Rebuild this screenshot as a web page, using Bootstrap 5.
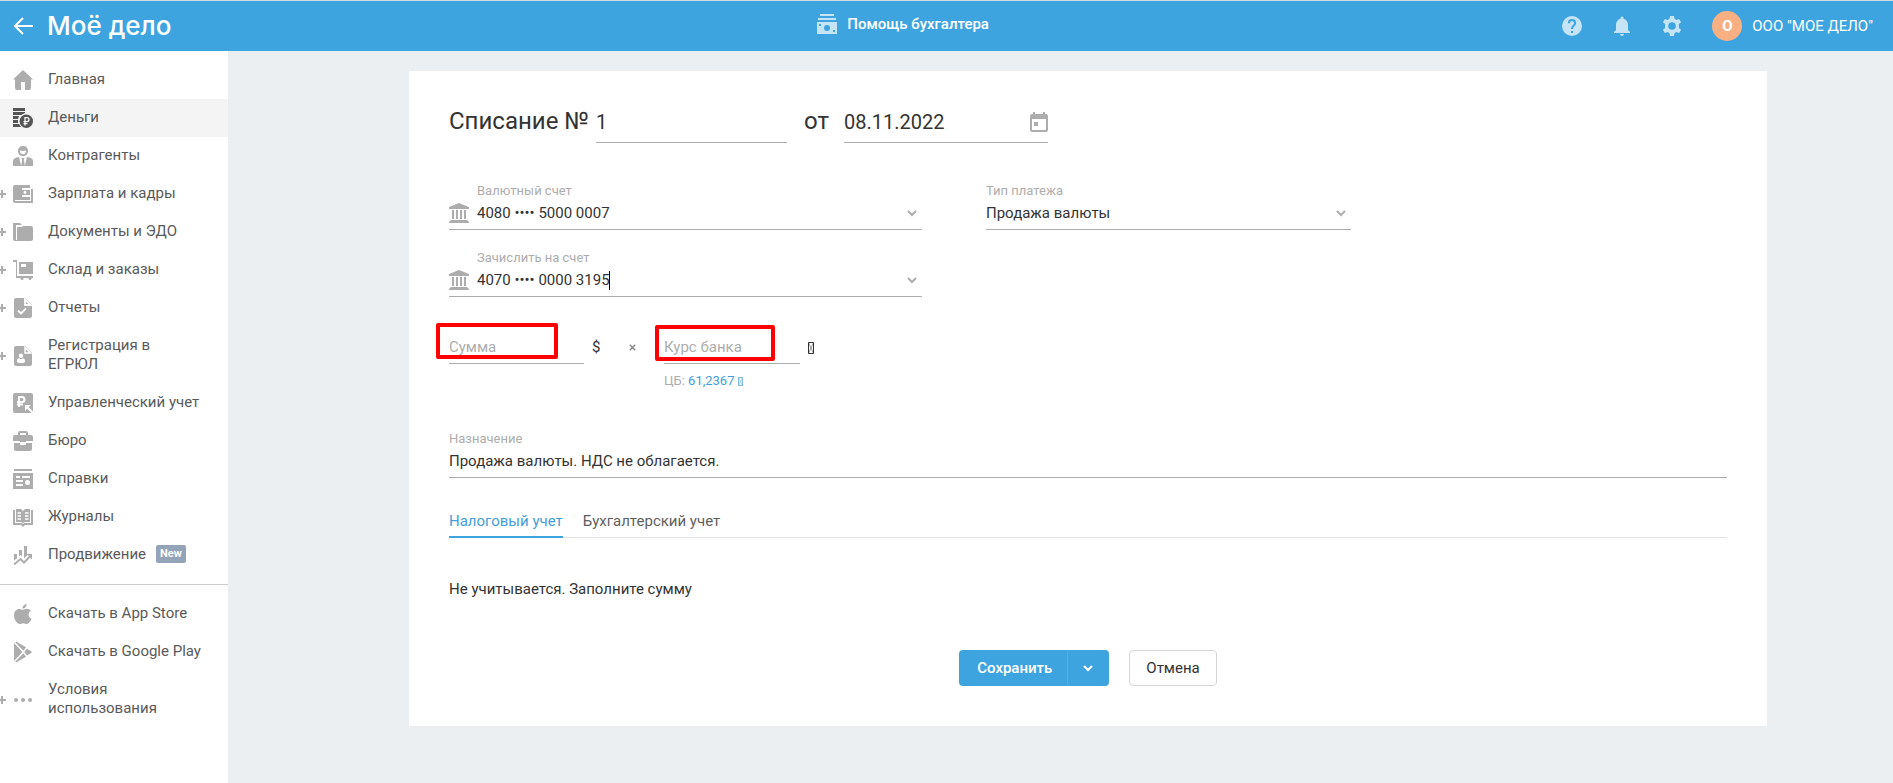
<!DOCTYPE html>
<html lang="ru">
<head>
<meta charset="utf-8">
<meta name="viewport" content="width=device-width, initial-scale=1">
<title>Моё дело — Списание</title>
<link href="https://cdn.jsdelivr.net/npm/bootstrap@5.3.0/dist/css/bootstrap.min.css" rel="stylesheet">
<style>
  :root { --blue: #3ea4e0; --ink: #333; --menu: #5a5a5a; --muted: #adadad; }
  body { font: 400 15px/19px Roboto, "Liberation Sans", sans-serif; color: var(--ink); background: #ebeff2; }
  a { text-decoration: none; }

  .topbar { height: 51px; background: var(--blue); border-top: 1px solid #d5dce1; color: #fff; padding-right: 20px; }
  .topbar a { color: #fff; }
  .brand-area { width: 228px; padding-left: 13px; gap: 14px; }
  .logo { font: 500 26px/30px Inter, sans-serif; }
  .pale { color: #c5e4f6; }
  .help-link { font-weight: 500; gap: 10px; padding-bottom: 4px; }
  .tools { gap: 30px; }
  .avatar { width: 30px; height: 30px; border-radius: 50%; background: #f8b083; font-weight: 700; }
  .account { gap: 10px; }

  .side { width: 228px; background: #fff; padding-top: 10px; min-height: calc(100vh - 51px); }
  .side a { color: var(--menu); padding: 9px 16px 10px 48px; position: relative; }
  .side a.active { background: #f4f4f4; }
  .side a > svg { position: absolute; left: 13px; top: 50%; margin-top: -10px; color: var(--muted); }
  .side a.active > svg { color: #555; }
  .side .expand::before, .side .expand::after { content: ""; position: absolute; background: var(--muted); top: 50%; }
  .side .expand::before { left: 0; width: 6px; height: 2px; margin-top: -1px; }
  .side .expand::after { left: 1px; width: 2px; height: 8px; margin-top: -4px; }
  .side .divider { height: 1px; margin: 10px 0; background: #ccc; border: 0; opacity: 1; }
  .tag-new { background: #93a3b8; font-size: 11px; line-height: 18px; font-weight: 700; padding: 0 4px; border-radius: 2px; margin-left: 10px; vertical-align: top; }

  .stage { padding: 20px 126px 40px 181px; }
  .sheet { background: #fff; padding: 36px 40px 40px; }
  .title { font-size: 24px; line-height: 28px; font-weight: 400; }
  .line-field { border: 0; border-bottom: 1px solid var(--muted); border-radius: 0; background: transparent; color: var(--ink); padding: 0 0 6px; display: flex; }
  .line-field input, .line-field select, .line-field textarea { border: 0; padding: 0; margin: 0; background: transparent; color: inherit; font: inherit; height: 19px; outline: 0; appearance: none; min-width: 0; resize: none; overflow: hidden; }
  .line-field ::placeholder { color: var(--muted); opacity: 1; }
  .line-field.big { font-size: 20px; line-height: 24px; padding-bottom: 8px; }
  .line-field.big input { height: 24px; }
  .no { width: 191px; margin: 0 17px 0 7px; }
  .date { width: 204px; margin-left: 15px; }
  .date svg { margin-top: 2px; }
  .cap { display: block; font-size: 13px; line-height: 15px; color: var(--muted); margin-bottom: 6px; }
  .fields { display: grid; grid-template-columns: 473fr 365fr 312fr; column-gap: 64px; row-gap: 20px; margin-top: 40px; }
  .with-icon .cap { margin-left: 28px; }
  .gl { color: var(--muted); }
  .bank { margin: -1px 8px 0 0; }
  .chev { margin: 6px 5px 0 0; }
  .typed { width: 132px; }
  .caret { width: 1px; height: 19px; background: #000; }

  .amounts { margin-top: 41px; }
  .sum { width: 135px; }
  .rate { width: 136px; }
  .unit { width: 80px; padding-left: 8px; }
  .times { margin: 6px 28px 0 0; }
  .rate-note { font-size: 13px; line-height: 15px; color: var(--muted); margin-top: 9px; }
  .rate-note a, .tabs .nav-link.active { color: #459dda; }
  .marker { position: absolute; border: 4px solid #f00; border-radius: 2px; pointer-events: none; }
  .marker-sum { left: -13px; top: -15px; width: 122px; height: 36px; }
  .marker-rate { left: -9px; top: -13px; width: 120px; height: 36px; }

  .purpose { margin-top: 43px; }
  .tabs { margin-top: 34px; gap: 20px; border-bottom: 1px solid #e3e3e3; }
  .tabs .nav-link { padding: 0 0 5px; background: transparent; border: 0; border-bottom: 2px solid transparent; margin-bottom: -1px; color: #5f5f5f; }
  .tabs .nav-link.active { border-color: var(--blue); }
  .note { margin-top: 42px; }
  .actions { margin-top: 51px; gap: 20px; }
  .actions .btn { font-size: 15px; line-height: 18px; height: 36px; border-radius: 4px; }
  .save { background: var(--blue); color: #fff; font-weight: 500; }
  .actions .save-main { padding: 0 15px 0 17px; }
  .actions .save-more { border-left: 1px solid #51b0e8; padding: 0 15px; }
  .actions .cancel { border: 1px solid #d5d5d5; color: var(--ink); background: #fff; padding: 0 16px; }
</style>
</head>
<body>
<svg class="d-none" xmlns="http://www.w3.org/2000/svg">
  <symbol id="chevron" viewBox="0 0 10 7"><path d="M1 1l4 4 4-4" fill="none" stroke="currentColor" stroke-width="2"/></symbol>
  <symbol id="bank" viewBox="0 0 20 20"><path fill="currentColor" d="M10 0l10 4v2H0V4zM3 7h2v9H3zm4 0h2v9H7zm4 0h2v9h-2zm4 0h2v9h-2zM2 17h16l2 2v1H0v-1z"/></symbol>
  <symbol id="tofu" viewBox="0 0 6 12"><path fill="none" stroke="currentColor" stroke-width="1" d="M.5.5h5v11h-5z"/><path fill="none" stroke="currentColor" stroke-width=".5" d="M.5.5l5 11m0-11l-5 11"/></symbol>
</svg>

<header class="topbar d-flex align-items-center">
  <div class="brand-area d-flex align-items-center flex-shrink-0">
    <a href="#" aria-label="Назад" class="d-flex"><svg width="20" height="18" viewBox="0 0 20 18"><path d="M10 1L2 9l8 8M2 9h18" fill="none" stroke="currentColor" stroke-width="2"/></svg></a>
    <a href="#" class="logo">Моё дело</a>
  </div>
  <div class="flex-fill d-flex justify-content-center ps-3">
    <a href="#" class="help-link d-flex align-items-center">
      <svg class="pale" width="20" height="20" viewBox="0 0 20 20"><path fill="currentColor" fill-rule="evenodd" d="M3 0h14v2H3zM1 4h18v2H1zM0 8h20v12H0zm2 2v2h2v-2zm14 6v2h2v-2zm-6-5a3 3 0 100 6 3 3 0 000-6z"/></svg>
      <span>Помощь бухгалтера</span></a>
  </div>
  <div class="tools d-flex align-items-center">
    <a href="#" class="d-flex" aria-label="Справка"><svg class="pale" width="20" height="20" viewBox="0 0 20 20"><circle cx="10" cy="10" r="10" fill="currentColor"/><path d="M6.900 7.200a3.100 3.100 0 116.200 0c0 2.300-3.100 2.600-3.100 5.800" fill="none" stroke="#3ea4e0" stroke-width="2"/><path fill="#3ea4e0" d="M9 15h2v2H9z"/></svg></a>
    <a href="#" class="d-flex" aria-label="Уведомления"><svg class="pale" width="20" height="20" viewBox="0 0 20 20"><path fill="currentColor" d="M10 20c1.100 0 2-.8 2-2H8c0 1.200.9 2 2 2zm6-6V9c0-3.100-1.600-5.600-4.500-6.300v-.7a1.500 1.500 0 00-3 0v.7C5.600 3.400 4 5.900 4 9v5l-2 2v1h16v-1z"/></svg></a>
    <a href="#" class="d-flex" aria-label="Настройки"><svg class="pale" width="20" height="20" viewBox="0 0 20 20"><path fill="currentColor" fill-rule="evenodd" d="M8 0h4l.5 2.800 1.900 1.100 2.700-1 2 3.400-2.200 1.800v3.800l2.200 1.800-2 3.400-2.700-1-1.900 1.100L12 20H8l-.5-2.800-1.900-1.100-2.700 1-2-3.400 2.200-1.800V8.100L.9 6.300l2-3.400 2.700 1 1.900-1.100zM10 6.200a3.800 3.800 0 100 7.600 3.800 3.800 0 000-7.600z"/></svg></a>
    <a href="#" class="account d-flex align-items-center"><span class="avatar d-flex align-items-center justify-content-center">О</span><span>ООО "МОЕ ДЕЛО"</span></a>
  </div>
</header>

<div class="d-flex">
  <nav class="side nav flex-column flex-nowrap flex-shrink-0" aria-label="Меню">
    <a href="#"><svg width="20" height="20" viewBox="0 0 20 20"><path fill="currentColor" d="M10 0l10 9.500h-2V18a2 2 0 01-2 2h-4v-8H8v8H4a2 2 0 01-2-2V9.500H0z"/></svg>Главная</a>
    <a href="#" class="active" aria-current="page"><svg width="20" height="20" viewBox="0 0 20 20"><path fill="currentColor" d="M0 0h12v3H0zM0 4h12v1L8 7H0zM0 8h6l-1 3H0zM0 12h5v3H0zM0 16h6l2 3H0z"/><circle cx="13.300" cy="13.300" r="6.700" fill="currentColor"/><path fill="none" stroke="#fff" stroke-width="1.300" d="M12 17.500V9.600h2a2 2 0 010 4h-3.500M10.500 15.600h4"/></svg>Деньги</a>
    <a href="#"><svg width="20" height="20" viewBox="0 0 20 20"><path fill="currentColor" fill-rule="evenodd" d="M10 0c3.300 0 5 2 5 5s-2 5-5 5-5-2-5-5 1.700-5 5-5zM7 4.500C7 7 8.300 8.300 10 8.300S13 7 13 4.500c-2 .5-4 .5-6 0z"/><path fill="currentColor" d="M0 20v-5c0-2 2-3.500 6-4l2.200 9zM20 20v-5c0-2-2-3.500-6-4l-2.200 9zM8.500 12h3l-.6 2 1 6H8.100l1-6z"/></svg>Контрагенты</a>
    <a href="#" class="expand"><svg width="20" height="20" viewBox="0 0 20 20"><path fill="currentColor" d="M2 1h15v3H9v9h8v3H2v1h16V5h2v14H2a2 2 0 01-2-2V3a2 2 0 012-2z"/><path fill="currentColor" fill-rule="evenodd" d="M9 4h1v9H9zM10 5h7v7h-7zm2 2a1.500 1.500 0 100 3 1.500 1.500 0 000-3z" opacity="0"/><path fill="currentColor" d="M9 6h8v5H9z"/><circle cx="12" cy="8.500" r="1.400" fill="#fff"/></svg>Зарплата и кадры</a>
    <a href="#" class="expand"><svg width="20" height="20" viewBox="0 0 20 20"><path fill="currentColor" d="M0 1h7l2 2H3v15h15v1H2a2 2 0 01-2-2zM4 5h5l1-1h8a2 2 0 012 2v11a2 2 0 01-2 2H4z"/></svg>Документы и ЭДО</a>
    <a href="#" class="expand"><svg width="20" height="20" viewBox="0 0 20 20"><path fill="currentColor" fill-rule="evenodd" d="M0 0h4v16h16v2H3V2H0zM6 2h14v12H6zm2 2v3h5V4z"/><circle cx="9" cy="18.500" r="1.500" fill="currentColor"/><circle cx="17" cy="18.500" r="1.500" fill="currentColor"/></svg>Склад и заказы</a>
    <a href="#" class="expand"><svg width="20" height="20" viewBox="0 0 20 20"><path fill="currentColor" d="M3 0h9l7 7v11a2 2 0 01-2 2H3a2 2 0 01-2-2V2a2 2 0 012-2z"/><path d="M12 1.500V7h5.500zM5 12.500l3 3 5-5" fill="none" stroke="#fff" stroke-width="1.800"/></svg>Отчеты</a>
    <a href="#" class="expand"><svg width="20" height="20" viewBox="0 0 20 20"><path fill="currentColor" d="M3 0h9l7 7v11a2 2 0 01-2 2H3a2 2 0 01-2-2V2a2 2 0 012-2z"/><path d="M12 1.500V7h5.500z" fill="none" stroke="#fff" stroke-width="1.500"/><circle cx="8" cy="9.800" r="2.200" fill="#fff"/><path fill="#fff" d="M4 15c0-2 1.500-3 2.500-2.500 1 .7 2 .7 3 0C10.500 12 12 13 12 15s-1.500 2-4 2-4 0-4-2z"/></svg>Регистрация в<br>ЕГРЮЛ</a>
    <a href="#"><svg width="20" height="20" viewBox="0 0 20 20"><rect width="20" height="20" rx="2" fill="currentColor"/><path fill="none" stroke="#fff" stroke-width="2" d="M6 14V4h3a2.500 2.500 0 010 5H4M4 11.500h6M20 20l-6-6"/><path fill="#fff" d="M12 12h6l-6 6z"/></svg>Управленческий учет</a>
    <a href="#"><svg width="20" height="20" viewBox="0 0 20 20"><path fill="currentColor" fill-rule="evenodd" d="M5 4V2a2 2 0 012-2h6a2 2 0 012 2v2h3a2 2 0 012 2v4h-7v1H7v-1H0V6a2 2 0 012-2zm2 0h6V2H7z"/><path fill="currentColor" d="M1 12h6v2h6v-2h6v6a2 2 0 01-2 2H3a2 2 0 01-2-2z"/></svg>Бюро</a>
    <a href="#"><svg width="20" height="20" viewBox="0 0 20 20"><path fill="currentColor" fill-rule="evenodd" d="M1 0h18v2H1zM0 4h20v16H0zm3 3v2h4V7zm6 0v2h8V7zm-6 4v2h7v-2zm0 4v2h7v-2zm11.500-4a2.500 2.500 0 100 5 2.500 2.500 0 000-5z"/></svg>Справки</a>
    <a href="#"><svg width="20" height="20" viewBox="0 0 20 20"><path fill="currentColor" d="M0 3h2v13h7l1 1 1-1h7V3h2v15h-8l-2 2-2-2H0zM3 2h5l2 2 2-2h5v13h-5l-2 1-2-1H3z"/><path stroke="#fff" stroke-width="1.500" d="M4.500 6H8m4 0h3.500M4.500 9H8m4 0h3.500M4.500 12H8m4 0h3.500"/></svg>Журналы</a>
    <a href="#"><svg width="20" height="20" viewBox="0 0 20 20"><path fill="currentColor" d="M1 9h3v8H1zM6 5h3v9H6zM11 1h3v14h-3z"/><path fill="none" stroke="#fff" stroke-width="5" d="M1 19l6.500-5.500L11 17l6-6"/><path fill="none" stroke="currentColor" stroke-width="2" d="M1 19.500L7.500 14l3.500 3.500 6-6"/><path fill="currentColor" d="M13.500 9H19v5.500z"/></svg>Продвижение<span class="tag-new text-white d-inline-block">New</span></a>
    <hr class="divider">
    <a href="#"><svg width="20" height="20" viewBox="0 0 20 20"><path fill="currentColor" d="M13.500 0c.2 2.500-1.600 4.500-4 4.500C9.400 2.200 11.200.2 13.500 0zM10 5.800c1 0 2-1 4-1 1.500 0 3 .8 3.900 2-3.500 2-2.900 6.600.6 8-1 2.700-2.700 5.200-4.500 5.200-1.400 0-2-.8-3.700-.8s-2.200.8-3.600.8C4 20 1 15.500 1 11.500c0-4.200 2.400-6.600 5.200-6.600 1.700 0 2.900.9 3.800.9z"/></svg>Скачать в App Store</a>
    <a href="#"><svg width="20" height="20" viewBox="0 0 20 20"><path fill="currentColor" d="M1 1l8.500 9L1 19zM2 0h2l9 5.200-2.600 3.500zM2 20h2l9-5.200-2.600-3.500zM14 6.800l4 2.200a1.200 1.200 0 010 2.200l-4 2.200-2.800-3.400z"/></svg>Скачать в Google Play</a>
    <a href="#" class="expand"><svg width="20" height="20" viewBox="0 0 20 20"><g fill="currentColor"><circle cx="3" cy="10" r="2"/><circle cx="10" cy="10" r="2"/><circle cx="17" cy="10" r="2"/></g></svg>Условия<br>использования</a>
  </nav>

  <main class="stage flex-fill">
    <form class="sheet">
      <div class="d-flex align-items-baseline">
        <label for="num" class="title">Списание №</label>
        <div class="line-field big no"><input id="num" class="w-100" value="1"></div>
        <label for="date" class="title">от</label>
        <div class="line-field big date"><input id="date" class="flex-fill" value="08.11.2022"><svg class="gl flex-shrink-0" width="18" height="20" viewBox="0 0 18 20"><path fill="currentColor" fill-rule="evenodd" d="M3 0h2v2h8V0h2v2h1a2 2 0 012 2v14a2 2 0 01-2 2H2a2 2 0 01-2-2V4a2 2 0 012-2h1zM2 7v11h14V7zm2 3h4v4H4z"/></svg></div>
      </div>

      <div class="fields">
        <div class="with-icon">
          <label class="cap" for="acc">Валютный счет</label>
          <div class="line-field">
            <svg class="gl bank flex-shrink-0" width="20" height="20"><use href="#bank"/></svg>
            <select id="acc" class="flex-fill"><option>4080 •••• 5000 0007</option></select>
            <svg class="gl chev flex-shrink-0" width="10" height="7"><use href="#chevron"/></svg>
          </div>
        </div>
        <div>
          <label class="cap" for="kind">Тип платежа</label>
          <div class="line-field">
            <select id="kind" class="flex-fill"><option>Продажа валюты</option></select>
            <svg class="gl chev flex-shrink-0" width="10" height="7"><use href="#chevron"/></svg>
          </div>
        </div>
        <div></div>
        <div class="with-icon">
          <label class="cap" for="to">Зачислить на счет</label>
          <div class="line-field">
            <svg class="gl bank flex-shrink-0" width="20" height="20"><use href="#bank"/></svg>
            <input id="to" role="combobox" aria-expanded="false" class="typed" value="4070 •••• 0000 3195"><span class="caret"></span>
            <svg class="gl chev flex-shrink-0 ms-auto" width="10" height="7"><use href="#chevron"/></svg>
          </div>
        </div>
      </div>

      <div class="amounts d-flex align-items-start">
        <div class="position-relative">
          <div class="line-field sum"><input id="sum" aria-label="Сумма" class="w-100" placeholder="Сумма"></div>
          <span class="marker marker-sum"></span>
        </div>
        <div class="unit d-flex justify-content-between"><span>$</span><svg class="times" width="7" height="7" viewBox="0 0 7 7"><path d="M.8.8l5.400 5.400M6.200.8L.8 6.200" stroke="#8a8a8a" stroke-width="1.500"/></svg></div>
        <div class="position-relative">
          <div class="line-field rate"><input id="rate" aria-label="Курс банка" class="w-100" placeholder="Курс банка"></div>
          <div class="rate-note">ЦБ: <a href="#">61,2367 <svg width="5" height="9" aria-label="руб."><use href="#tofu"/></svg></a></div>
          <span class="marker marker-rate"></span>
        </div>
        <svg class="ms-2 mt-1" width="6" height="12" aria-label="руб."><use href="#tofu"/></svg>
      </div>

      <div class="purpose">
        <label class="cap" for="purpose">Назначение</label>
        <div class="line-field"><textarea id="purpose" rows="1" class="w-100">Продажа валюты. НДС не облагается.</textarea></div>
      </div>

      <div class="nav tabs" role="tablist">
        <button type="button" class="nav-link active" role="tab" aria-selected="true">Налоговый учет</button>
        <button type="button" class="nav-link" role="tab" aria-selected="false">Бухгалтерский учет</button>
      </div>
      <p class="note mb-0">Не учитывается. Заполните сумму</p>

      <div class="actions d-flex justify-content-center">
        <div class="btn-group">
          <button type="button" class="btn save save-main">Сохранить</button>
          <button type="button" class="btn save save-more d-flex align-items-center" aria-label="Другие действия"><svg width="10" height="7"><use href="#chevron"/></svg></button>
        </div>
        <button type="button" class="btn cancel">Отмена</button>
      </div>
    </form>
  </main>
</div>
<script src="https://cdn.jsdelivr.net/npm/bootstrap@5.3.0/dist/js/bootstrap.bundle.min.js"></script>
</body>
</html>
